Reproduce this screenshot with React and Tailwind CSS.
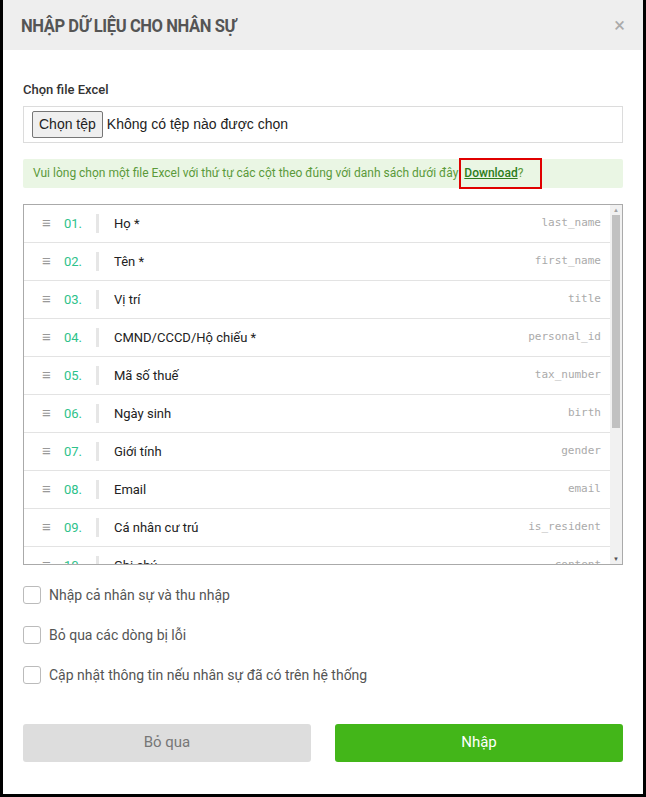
import React from "react";

const fields = [
  { no: "01.", label: "Họ *", key: "last_name" },
  { no: "02.", label: "Tên *", key: "first_name" },
  { no: "03.", label: "Vị trí", key: "title" },
  { no: "04.", label: "CMND/CCCD/Hộ chiếu *", key: "personal_id" },
  { no: "05.", label: "Mã số thuế", key: "tax_number" },
  { no: "06.", label: "Ngày sinh", key: "birth" },
  { no: "07.", label: "Giới tính", key: "gender" },
  { no: "08.", label: "Email", key: "email" },
  { no: "09.", label: "Cá nhân cư trú", key: "is_resident" },
  { no: "10.", label: "Ghi chú", key: "content" },
];

const options = [
  "Nhập cả nhân sự và thu nhập",
  "Bỏ qua các dòng bị lỗi",
  "Cập nhật thông tin nếu nhân sự đã có trên hệ thống",
];

const FieldRow = ({ no, label, fieldKey }) => (
  <div className="flex h-[38px] shrink-0 items-center border-b border-[#e3e3e3] pl-[18px] pr-[9px] pt-px">
    <span className="w-[22px] text-[15px] leading-none text-[#999]">≡</span>
    <span className="w-[32px] text-[13px] text-[#2ec28a]">{no}</span>
    <span className="h-[19px] w-[3px] bg-[#e6e6e6]" />
    <span className="ml-[15px] flex-1 text-[13px] text-[#222]">{label}</span>
    <span className="font-['DejaVu_Sans_Mono',monospace] text-[11px] text-[#aaa]">
      {fieldKey}
    </span>
  </div>
);

export default function App() {
  return (
    <div className="h-[797px] w-[646px] bg-black px-[3px] pb-[3px] font-['Roboto',sans-serif]">
      <div className="flex h-full flex-col bg-white">
        <div className="flex h-[50px] items-center justify-between bg-[#eeeeee] pl-[18px] pr-[18px]">
          <h1 className="origin-left scale-x-[0.92] text-[18px] font-bold tracking-tight text-[#555]">
            NHẬP DỮ LIỆU CHO NHÂN SỰ
          </h1>
          <span className="text-[20px] leading-none text-[#aaa]">×</span>
        </div>

        <div className="flex flex-1 flex-col px-[20px] pt-[30px]">
          <label className="text-[13px] font-medium text-[#333]">Chọn file Excel</label>
          <div className="mt-[6px] flex h-[37px] items-center border border-[#dcdcdc] px-[8px] font-['Liberation_Sans',sans-serif] text-[14px] text-[#222]">
            <span className="rounded-[2px] border border-[#767676] bg-[#efefef] px-[6px] py-[2px]">
              Chọn tệp
            </span>
            <span className="ml-[4px]">Không có tệp nào được chọn</span>
          </div>

          <div className="mt-[16px] flex h-[29px] items-center rounded-[2px] bg-[#eaf6e4] px-[10px] text-[12px] text-[#5a9a3a]">
            <span>Vui lòng chọn một file Excel với thứ tự các cột theo đúng với danh sách dưới đây</span>
            <span className="relative ml-[6px]">
              <span className="font-medium text-[#2e7d1c] underline">Download</span>?
              <span className="absolute -left-[5px] -top-[6px] h-[31px] w-[83px] border-2 border-[#e00000]" />
            </span>
          </div>

          <div className="mt-[16px] flex h-[361px] border border-[#aaa]">
            <div className="flex flex-1 flex-col overflow-hidden">
              {fields.map((f) => (
                <FieldRow key={f.key} no={f.no} label={f.label} fieldKey={f.key} />
              ))}
            </div>
            <div className="flex w-[12px] flex-col bg-[#f1f1f1]">
              <div className="flex h-[10px] items-center justify-center text-[6px] text-[#a3a3a3]">▲</div>
              <div className="mx-[2px] h-[213px] bg-[#c1c1c1]" />
              <div className="flex-1" />
              <div className="flex h-[10px] items-center justify-center text-[6px] text-[#505050]">▼</div>
            </div>
          </div>

          <div className="mt-[20px] flex flex-col gap-[19px]">
            {options.map((o) => (
              <div key={o} className="flex items-center gap-[8px]">
                <span className="h-[18px] w-[18px] rounded-[3px] border border-[#bbb] bg-white" />
                <span className="text-[14px] text-[#555]">{o}</span>
              </div>
            ))}
          </div>

          <div className="mt-[38px] grid grid-cols-2 gap-[24px]">
            <button className="h-[38px] rounded-[3px] bg-[#dddddd] text-[15px] text-[#777]">
              Bỏ qua
            </button>
            <button className="h-[38px] rounded-[3px] bg-[#43b619] text-[15px] text-white">
              Nhập
            </button>
          </div>
        </div>
      </div>
    </div>
  );
}
